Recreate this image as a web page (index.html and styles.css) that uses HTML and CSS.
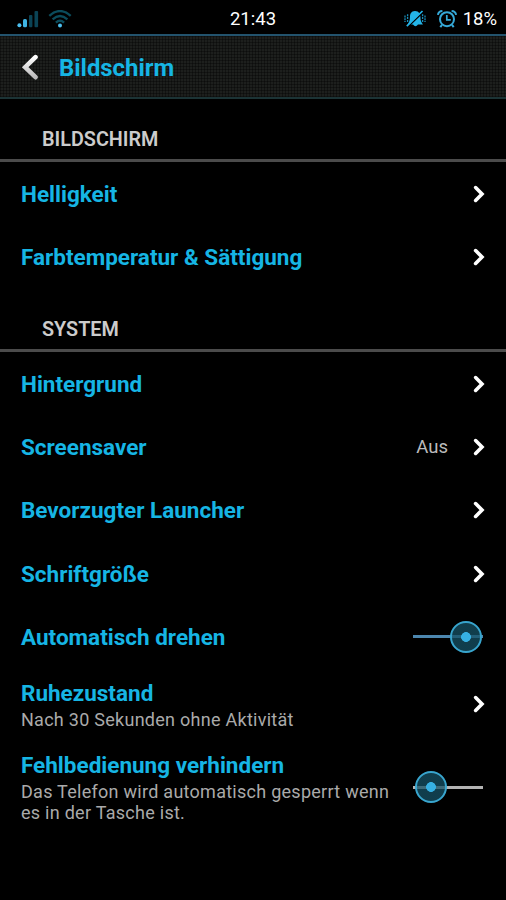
FILE: index.html
```
<!DOCTYPE html>
<html lang="de">
<head>
  <meta charset="UTF-8">
  <title>Bildschirm</title>
  <link rel="stylesheet" href="styles.css">
</head>
<body>

<svg class="defs" width="0" height="0">
  <symbol id="chevron" viewBox="0 0 12 18">
    <path d="M2.6 2.6 L9 9 L2.6 15.4" fill="none" stroke="#fff" stroke-width="3.6" stroke-linecap="round"/>
  </symbol>
</svg>

<div class="statusbar">
  <div class="status-left">
    <svg width="22" height="18" viewBox="0 0 22 18">
      <circle cx="2.4" cy="15.2" r="2" fill="#4cc0f0"/>
      <rect x="6" y="9" width="4" height="8.3" rx="1.6" fill="#3fb4e4"/>
      <rect x="12" y="5" width="3.4" height="12.3" rx="1" fill="#0b4456"/>
      <rect x="17.5" y="1" width="3.6" height="16.3" rx="1" fill="#0b4456"/>
    </svg>
    <svg width="24" height="18" viewBox="0 0 24 18">
      <g fill="none" stroke="#0b4c5c" stroke-width="2.4">
        <path d="M1.3 5.8 Q12 -3.6 22.7 5.8"/>
        <path d="M4.6 9.4 Q12 2.8 19.4 9.4"/>
        <path d="M7.9 12.6 Q12 9 16.1 12.6"/>
      </g>
      <circle cx="12" cy="15.4" r="2" fill="#4cc0f0"/>
    </svg>
  </div>
  <div class="clock">21:43</div>
  <div class="status-right">
    <svg width="22" height="18" viewBox="0 0 22 18">
      <path d="M11 1 C7 1.2 6 4 6 7 C6 10.5 5.2 12 3.6 14.4 H19 C17 12 16.4 10.5 16.4 7 C16.4 4 15 1.2 11 1 Z M9 14.5 H14 Q11.5 18 9 14.5Z" fill="#24b4e8"/>
      <path d="M4.2 16.5 L19.8 1.4" stroke="#000" stroke-width="1.6"/>
      <path d="M2.8 16.2 L18.5 1" stroke="#24b4e8" stroke-width="1.7"/>
      <path d="M1 5.5 V12 M3.6 4.3 V12.4 M18.6 4.3 V12.4 M21 5.5 V12" stroke="#198db8" stroke-width="1.3" stroke-dasharray="2 .8"/>
    </svg>
    <svg width="20" height="18" viewBox="0 0 20 18">
      <g fill="none" stroke="#35a9d8" stroke-width="2">
        <circle cx="10" cy="9.2" r="7"/>
        <path d="M.9 4.8 Q1.5 1.2 5.4 1 M19.1 4.8 Q18.5 1.2 14.6 1"/>
        <path d="M9.8 5 V9.8 H13.8" stroke-width="1.7"/>
        <path d="M5 14.8 L3.3 17.2 M15 14.8 L16.7 17.2"/>
      </g>
    </svg>
    <span class="battery">18%</span>
  </div>
</div>

<div class="header">
  <svg class="back" width="18" height="26" viewBox="0 0 18 26">
    <defs>
      <linearGradient id="silver" x1="0" y1="0" x2="0" y2="1">
        <stop offset="0" stop-color="#fff"/>
        <stop offset="1" stop-color="#bbb"/>
      </linearGradient>
    </defs>
    <path d="M14.5 3.2 L4.2 13.2 L14.5 23.2" fill="none" stroke="url(#silver)" stroke-width="4.6" stroke-linecap="round"/>
  </svg>
  <h1>Bildschirm</h1>
</div>

<h2>BILDSCHIRM</h2>
<div class="row">
  <div class="title">Helligkeit</div>
  <svg class="arrow"><use href="#chevron"/></svg>
</div>
<div class="row">
  <div class="title">Farbtemperatur &amp; Sättigung</div>
  <svg class="arrow"><use href="#chevron"/></svg>
</div>

<h2>SYSTEM</h2>
<div class="row">
  <div class="title">Hintergrund</div>
  <svg class="arrow"><use href="#chevron"/></svg>
</div>
<div class="row">
  <div class="title">Screensaver</div>
  <span class="value">Aus</span>
  <svg class="arrow"><use href="#chevron"/></svg>
</div>
<div class="row">
  <div class="title">Bevorzugter Launcher</div>
  <svg class="arrow"><use href="#chevron"/></svg>
</div>
<div class="row">
  <div class="title">Schriftgröße</div>
  <svg class="arrow"><use href="#chevron"/></svg>
</div>
<div class="row">
  <div class="title">Automatisch drehen</div>
  <div class="switch on"><span class="knob"></span></div>
</div>
<div class="row sleep">
  <div class="text">
    <div class="title">Ruhezustand</div>
    <div class="summary">Nach 30 Sekunden ohne Aktivität</div>
  </div>
  <svg class="arrow"><use href="#chevron"/></svg>
</div>
<div class="row pocket">
  <div class="text">
    <div class="title">Fehlbedienung verhindern</div>
    <div class="summary">Das Telefon wird automatisch gesperrt wenn<br>es in der Tasche ist.</div>
  </div>
  <div class="switch"><span class="knob"></span></div>
</div>

</body>
</html>
```

FILE: styles.css
```
* { box-sizing: border-box; }
body { margin: 0; height: 900px; overflow: hidden; background: #000; color: #fff; font-family: Roboto, sans-serif; }
.defs { position: absolute; }
svg { display: block; flex: none; }

/* status bar */
.statusbar { display: grid; grid-template-columns: 1fr auto 1fr; align-items: center; height: 34px; padding: 3px 9px 0 17px; font-size: 18.5px; line-height: 31px; }
.status-left { display: flex; gap: 9px; }
.clock { margin-right: 8px; padding-top: 1px; }
.status-right { display: flex; align-items: center; justify-content: flex-end; gap: 11px; }
.battery { margin-left: -5px; padding-top: 1px; }

/* title bar */
.header {
  display: flex; align-items: center; height: 65px; padding: 0 0 0 21px;
  border-top: 2px solid #23536d; border-bottom: 2px solid #1c3436;
  background: repeating-linear-gradient(0deg, rgba(0,0,0,.35) 0 1px, transparent 1px 3px),
    repeating-linear-gradient(90deg, rgba(0,0,0,.35) 0 1px, transparent 1px 3px), #1d1f1d;
}
h1 { margin: 2px 0 0 20px; color: #16b5e4; font-size: 23.9px; font-weight: 700; line-height: 30px; }

h2 { height: 63px; margin: 0; padding: 29px 0 0 42px; border-bottom: 3px solid #4b4b4b; color: #ccc; font-size: 19.8px; font-weight: 600; line-height: 23px; }

/* settings */
.row { display: flex; align-items: center; height: 63.3px; padding: 1px 21px 0 21px; }
.title { flex: 1; color: #16b5e4; font-size: 22.5px; font-weight: 700; line-height: 28px; white-space: nowrap; }
.text { flex: 1; }
.text .title { margin-bottom: 2px; }
.summary { color: #aaa; font-size: 18px; line-height: 21px; letter-spacing: 0.27px; white-space: nowrap; }
.value { margin-right: 25px; color: #bbb; font-size: 18.5px; }
.arrow { width: 12px; height: 18px; }
.sleep { height: 72px; }
.sleep .arrow { margin-top: -1px; }
.pocket { height: 93px; }

.switch { position: relative; width: 70px; height: 32px; margin-right: 2px; background: linear-gradient(#b3b3b3, #b3b3b3) center / 100% 3px no-repeat; }
.switch.on { background-image: linear-gradient(#4c86ae, #4c86ae); }
.knob { position: absolute; top: 0; left: 2px; width: 32px; height: 32px; border: 2px solid #38a5ce; border-radius: 50%; background: radial-gradient(circle, #36b0e2 0 4.6px, rgba(22,82,102,.75) 5.2px); }
.on .knob { left: 37px; }
```
